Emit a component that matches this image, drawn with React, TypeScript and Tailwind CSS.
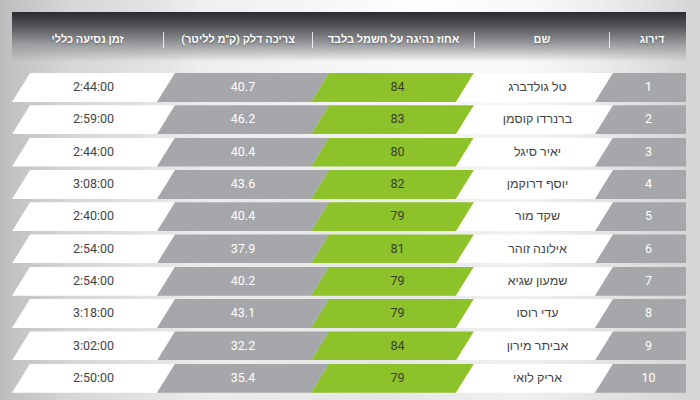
const rows = [
  { rank: 1, name: "טל גולדברג", ev: 84, fuel: "40.7", time: "2:44:00" },
  { rank: 2, name: "ברנרדו קוסמן", ev: 83, fuel: "46.2", time: "2:59:00" },
  { rank: 3, name: "יאיר סיגל", ev: 80, fuel: "40.4", time: "2:44:00" },
  { rank: 4, name: "יוסף דרוקמן", ev: 82, fuel: "43.6", time: "3:08:00" },
  { rank: 5, name: "שקד מור", ev: 79, fuel: "40.4", time: "2:40:00" },
  { rank: 6, name: "אילונה זוהר", ev: 81, fuel: "37.9", time: "2:54:00" },
  { rank: 7, name: "שמעון שגיא", ev: 79, fuel: "40.2", time: "2:54:00" },
  { rank: 8, name: "עדי רוסו", ev: 79, fuel: "43.1", time: "3:18:00" },
  { rank: 9, name: "אביתר מירון", ev: 84, fuel: "32.2", time: "3:02:00" },
  { rank: 10, name: "אריק לואי", ev: 79, fuel: "35.4", time: "2:50:00" },
];

const slant = "[clip-path:polygon(18px_0,100%_0,calc(100%-18px)_100%,0_100%)]";

export default function App() {
  return (
    <div
      className="relative w-[700px] h-[400px] overflow-hidden bg-[#e2e2e2]"
      style={{ fontFamily: 'Roboto, "Liberation Sans", "DejaVu Sans", sans-serif' }}
    >
      {/* soft studio background */}
      <div className="absolute inset-0 bg-[linear-gradient(90deg,#bdbdbd_0%,#d6d6d6_10%,#ececec_30%,#e6e6e6_55%,#f0f0f0_75%,#d4d4d4_100%)]" />
      <div className="absolute inset-0 bg-[radial-gradient(ellipse_at_60%_0%,#ffffff_0%,transparent_45%)]" />

      <div className="relative pt-[12px] pl-[12px] pr-[14px]">
        {/* header band */}
        <div className="flex h-[50px] items-center text-[11px] font-bold text-white bg-[linear-gradient(180deg,#2a2c31_0%,#55575c_30%,#9c9da0_65%,rgba(220,220,220,0)_100%)] [text-shadow:0_1px_2px_rgba(0,0,0,0.35)]">
          <div className="w-[151px] text-center pt-[6px]">זמן נסיעה כללי</div>
          <div className="w-px h-[16px] bg-white/80 mt-[6px]" />
          <div className="w-[148px] text-center pt-[6px]">צריכה דלק (ק"מ לליטר)</div>
          <div className="w-px h-[16px] bg-white/80 mt-[6px]" />
          <div className="w-[161px] text-center pt-[6px]">אחוז נהיגה על חשמל בלבד</div>
          <div className="w-px h-[16px] bg-white/80 mt-[6px]" />
          <div className="w-[134px] text-center pt-[6px]">שם</div>
          <div className="w-px h-[16px] bg-white/80 mt-[6px]" />
          <div className="flex-1 text-center pt-[6px] pl-[8px]">דירוג</div>
        </div>

        {/* rows */}
        <div className="mt-[11px] flex flex-col gap-[3.3px]">
          {rows.map((r) => (
            <div key={r.rank} className="flex h-[29px] text-[12.5px]">
              <div className={`w-[163px] bg-white text-[#444] flex items-center justify-center ${slant}`}>
                {r.time}
              </div>
              <div className={`w-[172px] -ml-[18px] bg-[#a6a7ab] text-white flex items-center justify-center ${slant}`}>
                {r.fuel}
              </div>
              <div className={`w-[163px] -ml-[18px] bg-[#8dc22a] text-[#3a3f2a] flex items-center justify-center pl-[10px] ${slant}`}>
                {r.ev}
              </div>
              <div className={`w-[157px] -ml-[18px] bg-white text-[#444] flex items-center justify-center pl-[6px] ${slant}`}>
                {r.name}
              </div>
              <div className="w-[91px] -ml-[18px] bg-[#a6a7ab] text-white flex items-center justify-center pl-[16px] [clip-path:polygon(18px_0,100%_0,100%_100%,0_100%)]">
                {r.rank}
              </div>
            </div>
          ))}
        </div>
      </div>
    </div>
  );
}
